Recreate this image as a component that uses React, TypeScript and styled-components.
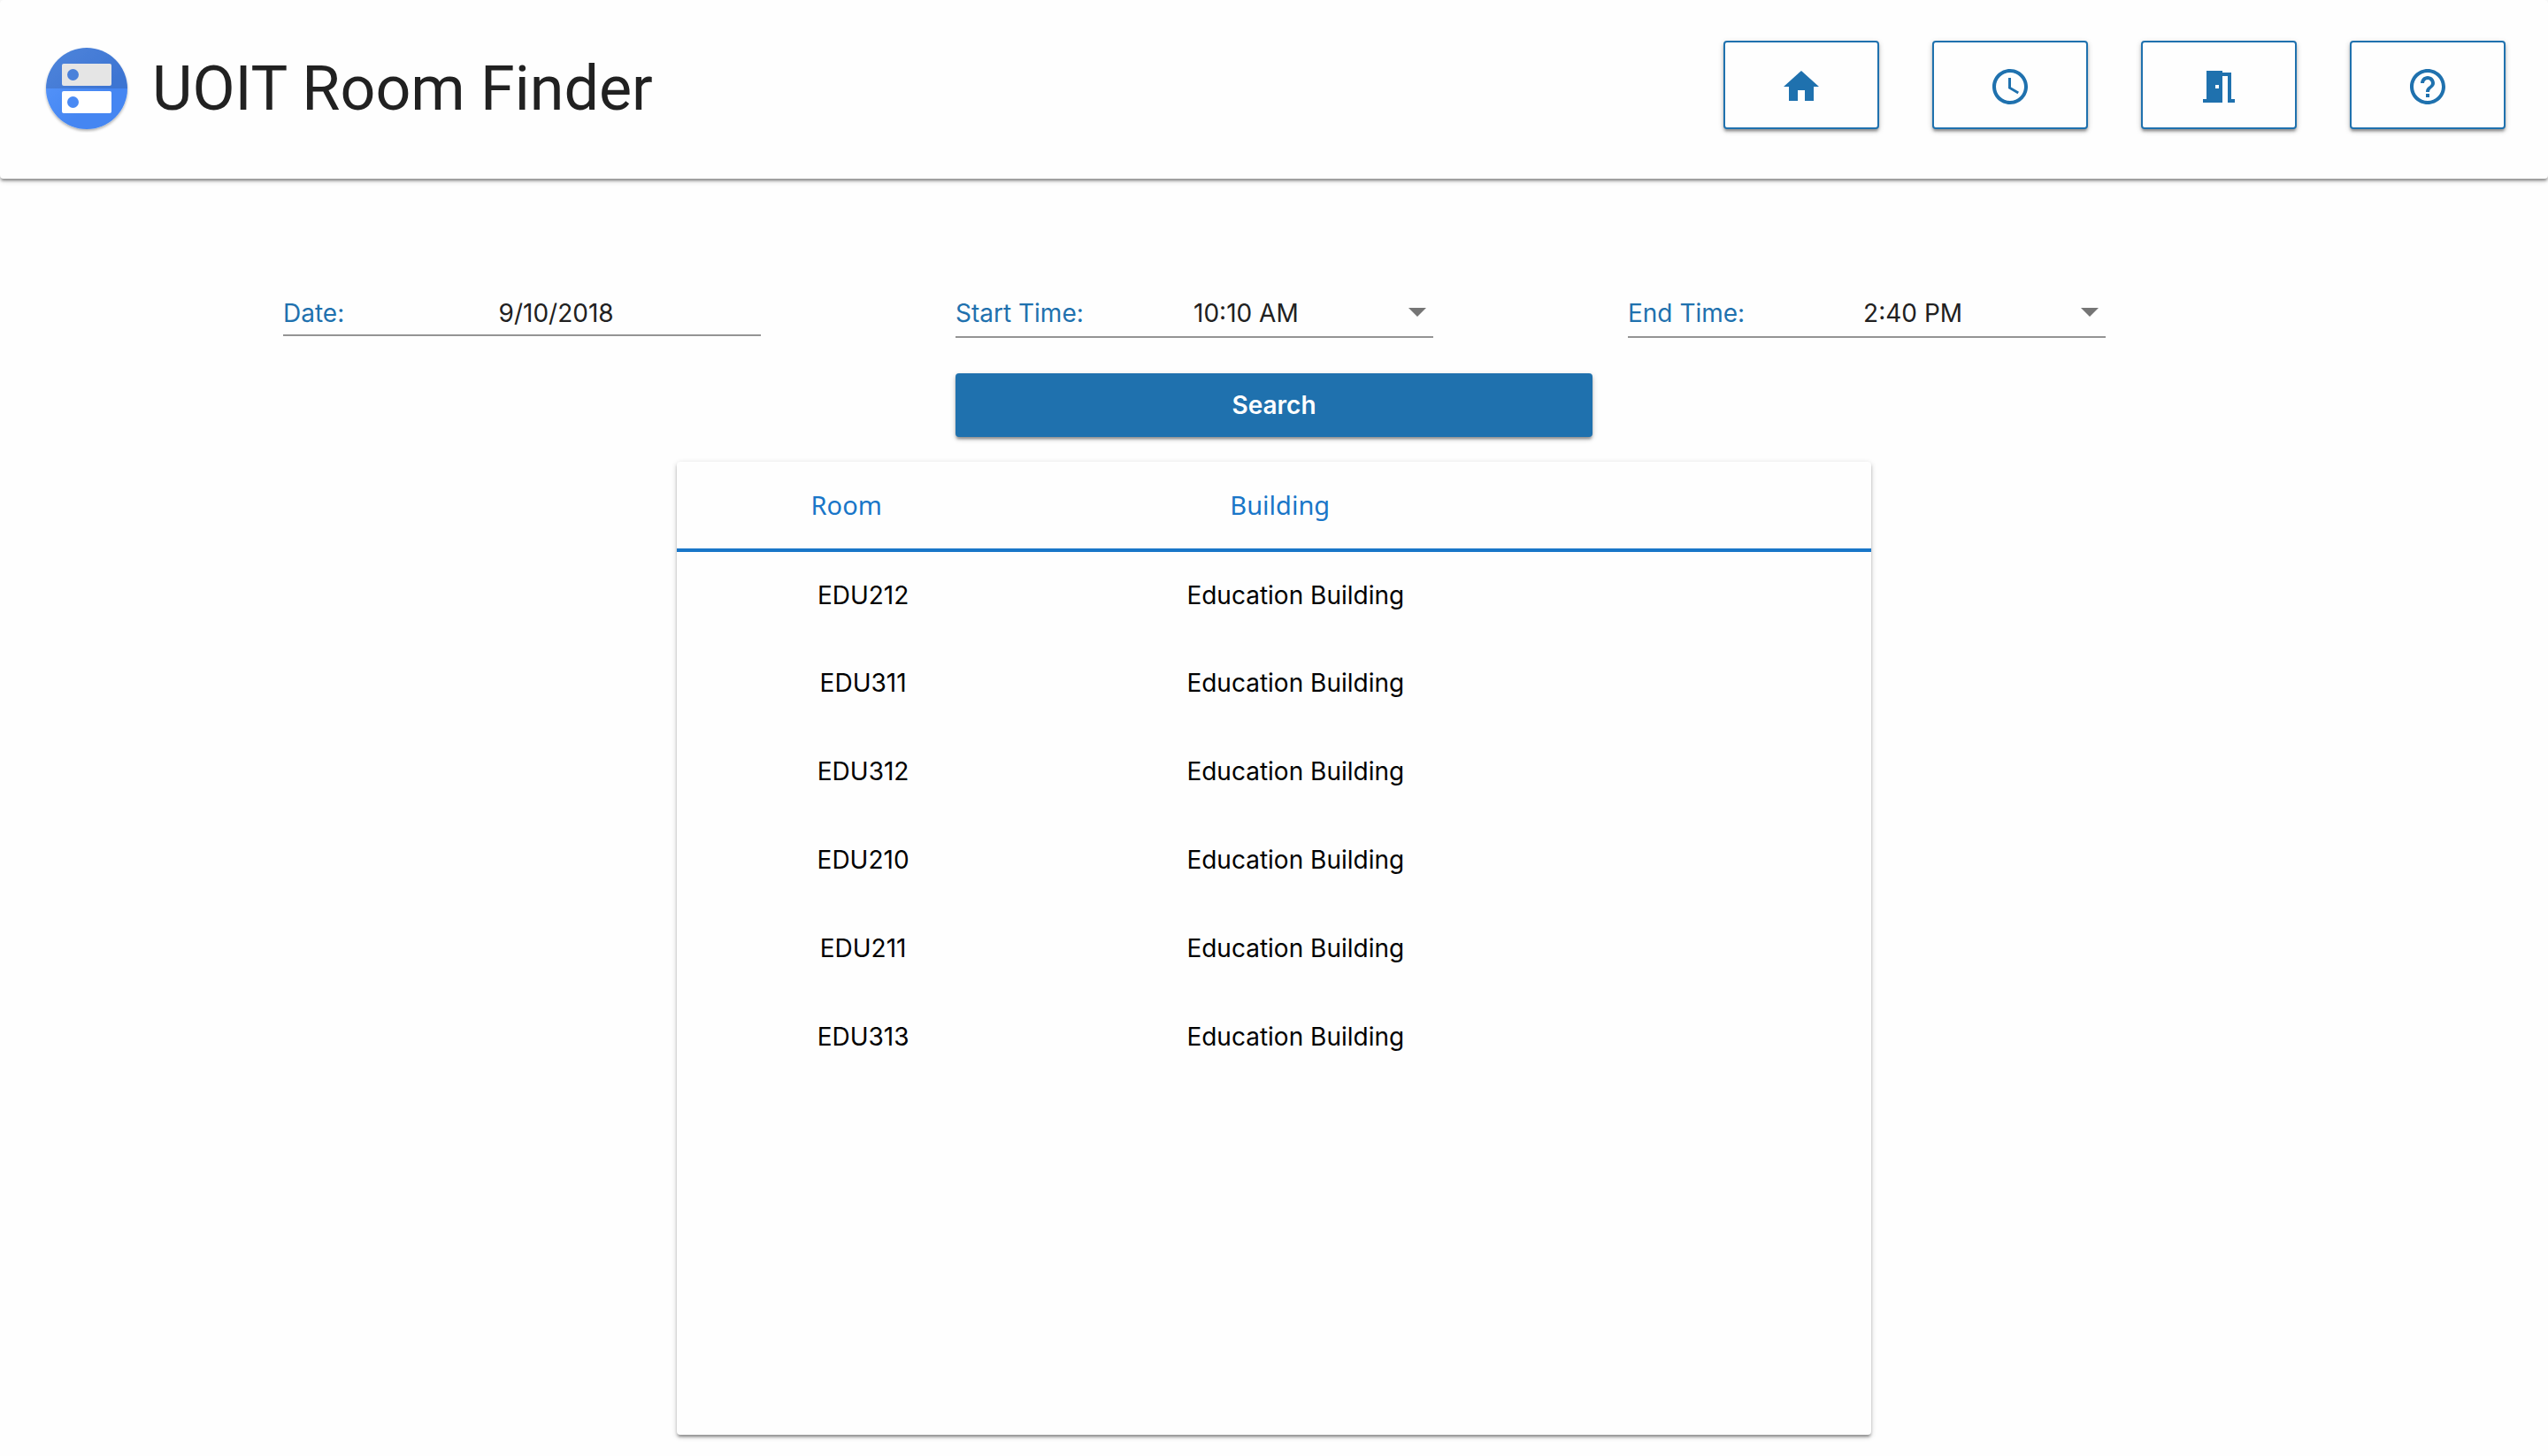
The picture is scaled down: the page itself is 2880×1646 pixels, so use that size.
import React, { useState } from "react";
import styled, { createGlobalStyle } from "styled-components";

const BLUE = "#1f71ae";
const SHADOW =
  "0 2px 6px rgba(0,0,0,0.2), 0 3px 3px rgba(0,0,0,0.2), 0 4px 2px -2px rgba(0,0,0,0.14)";

const GlobalStyle = createGlobalStyle`
  *, *::before, *::after { box-sizing: border-box; }
  body {
    margin: 0;
    background: #fefefe;
    color: #212121;
    font-family: Inter, Roboto, "Liberation Sans", sans-serif;
    font-size: 28px;
    line-height: 36px;
  }
  button, input, select { font: inherit; color: inherit; }
`;

const Header = styled.header`
  display: flex;
  justify-content: space-between;
  align-items: flex-start;
  padding: 46px 48px 52px 48px;
  background: #fefefe;
  border-radius: 4px;
  box-shadow: ${SHADOW};
`;

const Brand = styled.div`
  display: flex;
  align-items: center;
  gap: 24px;
  padding-top: 4px;
`;

const Title = styled.h1`
  margin: 0;
  font-family: Roboto, "Liberation Sans", sans-serif;
  font-size: 70px;
  font-weight: 400;
  line-height: 100px;
`;

const Nav = styled.nav`
  display: flex;
  gap: 60px;
`;

const NavButton = styled.button`
  display: flex;
  align-items: center;
  justify-content: center;
  width: 176px;
  height: 100px;
  padding: 4px 0 0;
  border: 2px solid ${BLUE};
  border-radius: 4px;
  background: #fefefe;
  color: ${BLUE};
  box-shadow: ${SHADOW};
  cursor: pointer;
`;

const Main = styled.main`
  padding: 128px 320px 24px;
`;

const SearchForm = styled.form`
  display: grid;
  grid-template-columns: repeat(3, 1fr);
  column-gap: 40px;
  row-gap: 40px;
`;

const Field = styled.div<{ $height: number }>`
  display: flex;
  align-items: flex-start;
  gap: 8px;
  width: 75%;
  height: ${(p) => p.$height}px;
  padding-top: 6px;
  border-bottom: 2px solid #949494;
`;

const Label = styled.label`
  color: ${BLUE};
  white-space: nowrap;
`;

const TextInput = styled.input`
  flex: 1;
  min-width: 0;
  height: 36px;
  padding: 0;
  border: 0;
  background: none;
  outline: none;
  text-align: center;
`;

const SelectBox = styled.div`
  position: relative;
  flex: 1;
`;

const Select = styled.select`
  display: block;
  width: 100%;
  height: 36px;
  padding: 0 36px 0 0;
  border: 0;
  background: none;
  outline: none;
  appearance: none;
  text-align: center;
  text-align-last: center;
`;

const Arrow = styled.svg`
  position: absolute;
  top: 12px;
  right: 8px;
  pointer-events: none;
`;

const SearchButton = styled.button`
  grid-column: 2;
  height: 72px;
  padding: 0;
  border: 0;
  border-radius: 4px;
  background: ${BLUE};
  color: #fff;
  font-weight: 600;
  box-shadow: ${SHADOW};
  cursor: pointer;
`;

const Results = styled.section`
  max-width: 1350px;
  min-height: 1100px;
  margin: 28px auto 0;
  border-radius: 4px;
  background: #fefefe;
  box-shadow: ${SHADOW};
`;

const Table = styled.table`
  display: block;
  border-spacing: 0;
  text-align: center;
`;

const Head = styled.thead`
  display: table;
  width: 100%;
  table-layout: fixed;
  border-spacing: 0;
  color: #1976c8;
`;

const Body = styled.tbody`
  display: table;
  width: 100%;
  table-layout: fixed;
  border-spacing: 0;
  color: #000;
`;

const HeadCell = styled.th<{ $width?: string }>`
  width: ${(p) => p.$width ?? "auto"};
  height: 102px;
  padding: 0;
  border-bottom: 4px solid #1976c8;
  font-size: 29px;
  font-weight: 400;
  font-family: "Noto Sans", "Open Sans", sans-serif;
`;

const Row = styled.tr`
  height: 100px;
  &:first-child { height: 98px; }
`;

const Cell = styled.td<{ $width?: string }>`
  width: ${(p) => p.$width ?? "auto"};
  padding: 0;
`;

const ICONS = [
  { label: "Home", d: "M10 20v-6h4v6h5v-8h3L12 3 2 12h3v8z" },
  {
    label: "Search by time",
    d: "M11.99 2C6.47 2 2 6.48 2 12s4.47 10 9.99 10C17.52 22 22 17.52 22 12S17.52 2 11.99 2zM12 20c-4.42 0-8-3.58-8-8s3.58-8 8-8 8 3.58 8 8-3.58 8-8 8zm.5-13H11v6l5.25 3.15.75-1.23-4.5-2.67z",
  },
  {
    label: "Search by room",
    d: "M14 6v15H3v-2h2V3h9v1h5v15h2v2h-4V6h-3zm-4 5v2h2v-2h-2z",
  },
  {
    label: "Help",
    d: "M11 18h2v-2h-2v2zm1-16C6.48 2 2 6.48 2 12s4.48 10 10 10 10-4.48 10-10S17.52 2 12 2zm0 18c-4.41 0-8-3.59-8-8s3.59-8 8-8 8 3.59 8 8-3.59 8-8 8zm0-14c-2.21 0-4 1.79-4 4h2c0-1.1.9-2 2-2s2 .9 2 2c0 2-3 1.75-3 5h2c0-2.25 3-2.5 3-5 0-2.21-1.79-4-4-4z",
  },
];

const ROOMS = ["EDU212", "EDU311", "EDU312", "EDU210", "EDU211", "EDU313"];
const TIMES = ["10:10 AM", "11:10 AM", "12:40 PM", "2:10 PM", "2:40 PM", "3:40 PM"];

function Logo() {
  return (
    <svg width="100" height="100" viewBox="0 0 100 100" aria-hidden="true">
      <defs>
        <linearGradient id="logoTop" x1="0" y1="0" x2="1" y2="0.6">
          <stop offset="0" stopColor="#4f86dc" />
          <stop offset="1" stopColor="#3d74d2" />
        </linearGradient>
        <linearGradient id="logoBottom" x1="0" y1="0" x2="1" y2="0.6">
          <stop offset="0" stopColor="#5291f8" />
          <stop offset="0.6" stopColor="#4486f2" />
        </linearGradient>
        <filter id="logoShadow" x="-10%" y="-10%" width="120%" height="125%">
          <feDropShadow dx="0" dy="2" stdDeviation="1.5" floodOpacity="0.3" />
        </filter>
      </defs>
      <g filter="url(#logoShadow)">
        <path d="M4 50a46 46 0 0 1 92 0z" fill="url(#logoTop)" />
        <path d="M4 50a46 46 0 0 0 92 0z" fill="url(#logoBottom)" />
      </g>
      <rect x="22" y="22" width="56" height="25" rx="2" fill="#e5e5e5" />
      <rect x="22" y="53" width="56" height="25" rx="2" fill="#fff" />
      <circle cx="34.500" cy="34.500" r="6.500" fill="#4a81da" />
      <circle cx="34.500" cy="65.500" r="6.500" fill="#4a8af4" />
    </svg>
  );
}

function TimeField(props: { id: string; label: string; initial: string }) {
  const [value, setValue] = useState(props.initial);
  return (
    <Field $height={52}>
      <Label htmlFor={props.id}>{props.label}</Label>
      <SelectBox>
        <Select id={props.id} value={value} onChange={(e) => setValue(e.target.value)}>
          {TIMES.map((t) => (
            <option key={t}>{t}</option>
          ))}
        </Select>
        <Arrow width="20" height="10" viewBox="0 0 20 10" aria-hidden="true">
          <path d="M0 0h20L10 10z" fill="#757575" />
        </Arrow>
      </SelectBox>
    </Field>
  );
}

export default function App() {
  const [date, setDate] = useState("9/10/2018");
  return (
    <>
      <GlobalStyle />
      <Header>
        <Brand>
          <Logo />
          <Title>UOIT Room Finder</Title>
        </Brand>
        <Nav>
          {ICONS.map((icon) => (
            <NavButton key={icon.label} type="button" aria-label={icon.label}>
              <svg width="48" height="48" viewBox="0 0 24 24" fill="currentColor" aria-hidden="true">
                <path d={icon.d} />
              </svg>
            </NavButton>
          ))}
        </Nav>
      </Header>
      <Main>
        <SearchForm onSubmit={(e) => e.preventDefault()}>
          <Field $height={50}>
            <Label htmlFor="date">Date:</Label>
            <TextInput id="date" value={date} onChange={(e) => setDate(e.target.value)} />
          </Field>
          <TimeField id="start" label="Start Time:" initial="10:10 AM" />
          <TimeField id="end" label="End Time:" initial="2:40 PM" />
          <SearchButton type="submit">Search</SearchButton>
        </SearchForm>
        <Results>
          <Table>
            <Head>
              <tr>
                <HeadCell $width="28.4%">Room</HeadCell>
                <HeadCell $width="44.2%">Building</HeadCell>
                <HeadCell />
              </tr>
            </Head>
            <Body>
              {ROOMS.map((room) => (
                <Row key={room}>
                  <Cell $width="31.2%">{room}</Cell>
                  <Cell $width="41.2%">Education Building</Cell>
                  <Cell />
                </Row>
              ))}
            </Body>
          </Table>
        </Results>
      </Main>
    </>
  );
}
